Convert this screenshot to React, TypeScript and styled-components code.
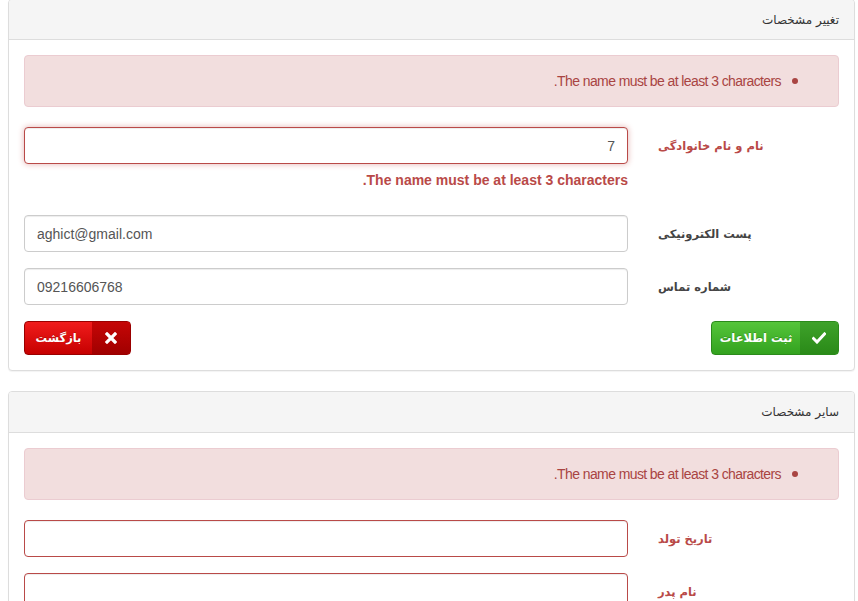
import React from "react";
import styled, { createGlobalStyle, css } from "styled-components";

const Global = createGlobalStyle`
  html, body { margin: 0; padding: 0; background: #fff; }
  body { font-family: "DejaVu Sans", "Noto Sans", sans-serif; direction: rtl; }
  * { box-sizing: border-box; }
`;

const Page = styled.div`
  padding: 0 3px 0 8px;
  display: flex;
  flex-direction: column;
  gap: 20px;
`;

const Panel = styled.section<{ $first?: boolean }>`
  border: 1px solid #dddddd;
  border-radius: 4px;
  background: #fff;
  box-shadow: 0 1px 1px rgba(0, 0, 0, 0.05);
  ${(p) => p.$first && css`margin-top: -1px;`}
`;

const PanelHeading = styled.div<{ $tall?: boolean }>`
  height: ${(p) => (p.$tall ? 41 : 40)}px;
  display: flex;
  align-items: center;
  padding: 0 15px;
  background: #f5f5f5;
  border-bottom: 1px solid #dddddd;
  border-radius: 3px 3px 0 0;
  font-size: 12px;
  color: #333;
`;

const PanelBody = styled.div`
  padding: 15px;
`;

const Alert = styled.div`
  height: 52px;
  background: #f2dede;
  border: 1px solid #ebccd1;
  border-radius: 4px;
  color: #a94442;
  display: flex;
  align-items: center;
  padding: 0 40px 0 15px;
  margin-bottom: 20px;
  font-family: "Liberation Sans", sans-serif;
  font-size: 14px;
  letter-spacing: -0.6px;
  gap: 6px;
`;

const Bullet = styled.span`
  width: 6px;
  height: 6px;
  border-radius: 50%;
  background: #a94442;
  margin-left: 5px;
`;

const Row = styled.div`
  display: flex;
  margin-bottom: 16px;
`;

const LabelCol = styled.label<{ $error?: boolean }>`
  width: 211px;
  flex: none;
  padding-left: 30px;
  height: 37px;
  display: flex;
  align-items: center;
  justify-content: flex-end;
  font-size: 11.5px;
  font-weight: bold;
  color: ${(p) => (p.$error ? "#b94a48" : "#444")};
`;

const FieldCol = styled.div`
  flex: 1;
`;

const Input = styled.input<{ $error?: boolean; $ltr?: boolean; $glow?: boolean }>`
  width: 100%;
  height: 37px;
  border: 1px solid ${(p) => (p.$error ? "#b94a48" : "#cccccc")};
  border-radius: 4px;
  padding: 0 12px;
  font-family: "Liberation Sans", sans-serif;
  font-size: 14px;
  color: #555;
  direction: ${(p) => (p.$ltr ? "ltr" : "rtl")};
  background: #fff;
  outline: none;
  box-shadow: ${(p) =>
    p.$glow ? "inset 0 1px 1px rgba(0,0,0,.075), 0 0 6px #e4b2b1" : "inset 0 1px 1px rgba(0,0,0,.075)"};
`;

const Help = styled.div`
  margin: 6px 0 9px;
  line-height: 20px;
  font-family: "Liberation Sans", sans-serif;
  font-weight: bold;
  font-size: 14px;
  color: #b94a48;
`;

const Actions = styled.div`
  display: flex;
  justify-content: space-between;
`;

const Btn = styled.button<{ $kind: "green" | "red" }>`
  height: 34px;
  display: flex;
  align-items: stretch;
  padding: 0;
  border-radius: 4px;
  cursor: pointer;
  overflow: hidden;
  font-family: "DejaVu Sans", sans-serif;
  font-weight: bold;
  font-size: 11.5px;
  color: #fff;
  ${(p) =>
    p.$kind === "green"
      ? css`
          width: 128px;
          border: 1px solid #2b8a1b;
          background: linear-gradient(#55c53a, #33a21f);
        `
      : css`
          width: 107px;
          border: 1px solid #9a0000;
          background: linear-gradient(#f01c1c, #c60000);
        `}
`;

const BtnIcon = styled.span<{ $kind: "green" | "red" }>`
  width: 38px;
  flex: none;
  display: flex;
  align-items: center;
  justify-content: center;
  background: ${(p) =>
    p.$kind === "green" ? "linear-gradient(#3ea22a, #2a8a18)" : "linear-gradient(#c50606, #a00000)"};
`;

const BtnText = styled.span`
  flex: 1;
  display: flex;
  align-items: center;
  justify-content: center;
  text-shadow: 0 -1px 0 rgba(0, 0, 0, 0.2);
`;

const Check = () => (
  <svg width="14" height="12" viewBox="0 0 14 12">
    <path d="M1.5 6.5 L5 10 L12.5 2" fill="none" stroke="#fff" strokeWidth="3" strokeLinecap="square" />
  </svg>
);

const Cross = () => (
  <svg width="12" height="12" viewBox="0 0 12 12">
    <path d="M2 2 L10 10 M10 2 L2 10" fill="none" stroke="#fff" strokeWidth="3.2" strokeLinecap="square" />
  </svg>
);

const msg = "The name must be at least 3 characters.";

export default function App() {
  return (
    <>
      <Global />
      <Page>
        <Panel $first>
          <PanelHeading>تغییر مشخصات</PanelHeading>
          <PanelBody>
            <Alert>
              <Bullet />
              <span>{msg}</span>
            </Alert>
            <Row>
              <LabelCol $error>نام و نام خانوادگی</LabelCol>
              <FieldCol>
                <Input $error $glow defaultValue="7" />
                <Help>{msg}</Help>
              </FieldCol>
            </Row>
            <Row>
              <LabelCol>پست الکترونیکی</LabelCol>
              <FieldCol>
                <Input $ltr defaultValue="aghict@gmail.com" />
              </FieldCol>
            </Row>
            <Row>
              <LabelCol>شماره تماس</LabelCol>
              <FieldCol>
                <Input $ltr defaultValue="09216606768" />
              </FieldCol>
            </Row>
            <Actions>
              <Btn $kind="green">
                <BtnIcon $kind="green">
                  <Check />
                </BtnIcon>
                <BtnText>ثبت اطلاعات</BtnText>
              </Btn>
              <Btn $kind="red">
                <BtnIcon $kind="red">
                  <Cross />
                </BtnIcon>
                <BtnText>بازگشت</BtnText>
              </Btn>
            </Actions>
          </PanelBody>
        </Panel>
        <Panel>
          <PanelHeading $tall>سایر مشخصات</PanelHeading>
          <PanelBody>
            <Alert>
              <Bullet />
              <span>{msg}</span>
            </Alert>
            <Row>
              <LabelCol $error>تاریخ تولد</LabelCol>
              <FieldCol>
                <Input $error />
              </FieldCol>
            </Row>
            <Row>
              <LabelCol $error>نام پدر</LabelCol>
              <FieldCol>
                <Input $error />
              </FieldCol>
            </Row>
          </PanelBody>
        </Panel>
      </Page>
    </>
  );
}
